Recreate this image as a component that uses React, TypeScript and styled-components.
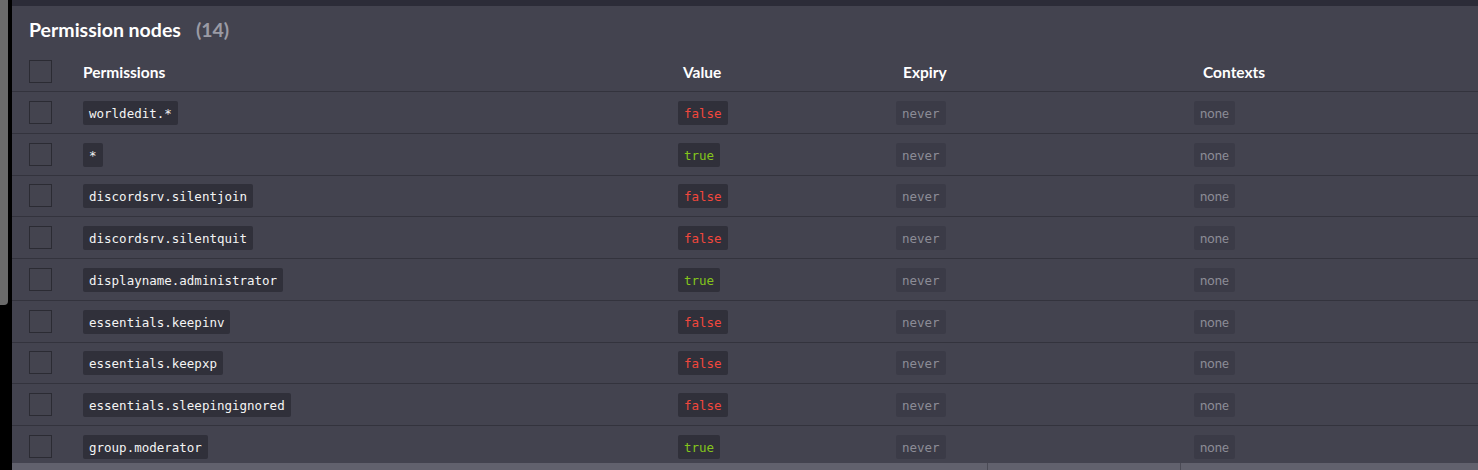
import React from "react";
import styled, { createGlobalStyle } from "styled-components";

const GlobalStyle = createGlobalStyle`
    body {
        margin: 0;
        background: #000;
        font-family: Lato, "Liberation Sans", sans-serif;
        overflow: hidden;
    }
`;

const Page = styled.div`
    display: flex;
    width: 1478px;
    height: 470px;
    overflow: hidden;
`;

const ScrollTrack = styled.div`
    width: 12px;
    flex-shrink: 0;
    background: #000;
`;

const ScrollThumb = styled.div`
    width: 8px;
    height: 305px;
    background: #6a6a6a;
    border-radius: 0 0 4px 0;
`;

const Main = styled.div`
    flex: 1;
    display: flex;
    flex-direction: column;
    min-width: 0;
`;

const TopBar = styled.div`
    height: 6px;
    background: #2c2c38;
    flex-shrink: 0;
`;

const Panel = styled.section`
    flex: 1;
    background: #43434f;
    overflow: hidden;
    min-height: 0;
`;

const TitleRow = styled.h2`
    margin: 0;
    padding: 11px 0 0 17px;
    height: 24px;
    display: flex;
    align-items: center;
    font-size: 19.5px;
    font-weight: 700;
    color: #fff;
`;

const Count = styled.span`
    margin-left: 15px;
    color: #9b9ba5;
`;

const Row = styled.div<{ $header?: boolean }>`
    display: grid;
    grid-template-columns: 54px 595px 218px 298px 1fr;
    align-items: ${(p) => (p.$header ? "start" : "center")};
    padding-left: 17px;
    height: ${(p) => (p.$header ? "31px" : "40.75px")};
    margin-top: ${(p) => (p.$header ? "19px" : "0")};
    border-bottom: 1px solid #33333d;
`;

const Cell = styled.div`
    display: flex;
    align-items: center;
    padding-top: 1px;
`;

const Check = styled.div`
    width: 21px;
    height: 21px;
    border: 1px solid #2b2b33;
    background: #44444f;
`;

const HeaderCell = styled.div<{ $offset: number }>`
    padding-left: ${(p) => p.$offset}px;
    padding-top: 3px;
    font-size: 15.5px;
    font-weight: 700;
    color: #fff;
`;

const Badge = styled.span<{ $tone: "node" | "true" | "false" | "muted" }>`
    display: inline-block;
    padding: 0 6px;
    height: 24px;
    line-height: 25px;
    border-radius: 2px;
    font-family: "DejaVu Sans Mono", "Liberation Mono", monospace;
    font-size: 12.5px;
    background: ${(p) => (p.$tone === "muted" ? "#3b3b47" : "#30303a")};
    color: ${(p) =>
        p.$tone === "true"
            ? "#84c51c"
            : p.$tone === "false"
            ? "#f2473c"
            : p.$tone === "muted"
            ? "#8c8c96"
            : "#f4f4f4"};
`;

const SansBadge = styled(Badge)`
    font-family: Lato, "Liberation Sans", sans-serif;
    font-size: 13px;
    line-height: 24px;
`;

const Footer = styled.div`
    height: 7px;
    flex-shrink: 0;
    display: grid;
    grid-template-columns: 976px 193px 1fr;
    background: #61616d;
`;

const FooterCell = styled.div`
    border-right: 1px solid #4a4a55;
    &:last-child {
        border-right: none;
    }
`;

const nodes: { name: string; value: boolean }[] = [
    { name: "worldedit.*", value: false },
    { name: "*", value: true },
    { name: "discordsrv.silentjoin", value: false },
    { name: "discordsrv.silentquit", value: false },
    { name: "displayname.administrator", value: true },
    { name: "essentials.keepinv", value: false },
    { name: "essentials.keepxp", value: false },
    { name: "essentials.sleepingignored", value: false },
    { name: "group.moderator", value: true },
];

function App() {
    return (
        <Page>
            <GlobalStyle />
            <ScrollTrack>
                <ScrollThumb />
            </ScrollTrack>
            <Main>
                <TopBar />
                <Panel>
                    <TitleRow>
                        Permission nodes <Count>(14)</Count>
                    </TitleRow>
                    <Row $header>
                        <Check />
                        <HeaderCell $offset={0}>Permissions</HeaderCell>
                        <HeaderCell $offset={5}>Value</HeaderCell>
                        <HeaderCell $offset={7}>Expiry</HeaderCell>
                        <HeaderCell $offset={9}>Contexts</HeaderCell>
                    </Row>
                    {nodes.map((n) => (
                        <Row key={n.name}>
                            <Check />
                            <Cell>
                                <Badge $tone="node">{n.name}</Badge>
                            </Cell>
                            <Cell>
                                <Badge $tone={n.value ? "true" : "false"}>
                                    {n.value ? "true" : "false"}
                                </Badge>
                            </Cell>
                            <Cell>
                                <Badge $tone="muted">never</Badge>
                            </Cell>
                            <Cell>
                                <SansBadge $tone="muted">none</SansBadge>
                            </Cell>
                        </Row>
                    ))}
                </Panel>
                <Footer>
                    <FooterCell />
                    <FooterCell />
                    <FooterCell />
                </Footer>
            </Main>
        </Page>
    );
}

export default App;
